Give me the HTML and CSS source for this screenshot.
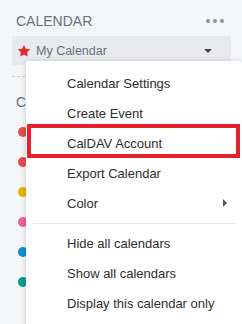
FILE: index.html
```html
<!DOCTYPE html>
<html lang="en">
<head>
    <meta charset="UTF-8">
    <meta name="viewport" content="width=device-width, initial-scale=1.0">
    <title>Calendar</title>
    <link rel="stylesheet" href="styles.css">
</head>
<body>
    <div class="sidebar">
        <div class="head">
            <span class="title">CALENDAR</span>
            <span class="more"><i></i><i></i><i></i></span>
        </div>
        <div class="current">
            <svg class="star" viewBox="0 0 24 24" width="14" height="14">
                <path d="M12 1.5l3.2 6.6 7.3 1-5.3 5.1 1.3 7.3L12 18l-6.5 3.5 1.3-7.3L1.5 9.1l7.3-1z" fill="#e8272f"/>
            </svg>
            <span class="name">My Calendar</span>
            <span class="caret"></span>
        </div>
        <div class="divider"></div>
        <div class="section">C</div>
        <ul class="cal-list">
            <li><span class="dot red"></span></li>
            <li><span class="dot red"></span></li>
            <li><span class="dot yellow"></span></li>
            <li><span class="dot pink"></span></li>
            <li><span class="dot blue"></span></li>
            <li><span class="dot teal"></span></li>
        </ul>

        <div class="menu">
            <div class="item">Calendar Settings</div>
            <div class="item">Create Event</div>
            <div class="item marked">CalDAV Account</div>
            <div class="item">Export Calendar</div>
            <div class="item sub">Color <span class="arrow"></span></div>
            <div class="sep"></div>
            <div class="item">Hide all calendars</div>
            <div class="item">Show all calendars</div>
            <div class="item">Display this calendar only</div>
        </div>
    </div>
</body>
</html>
```

FILE: styles.css
```css
* {
    margin: 0;
    padding: 0;
    box-sizing: border-box;
}

html, body {
    overflow: hidden;
}

body {
    background: #f5f6f8;
    font-family: "Liberation Sans", Arial, sans-serif;
}

.sidebar {
    position: relative;
    width: 243px;
    height: 324px;
    padding: 13px 12px 0 12px;
}

.head {
    display: flex;
    justify-content: space-between;
    align-items: center;
    height: 16px;
    padding: 0 7px 0 4px;
}

.title {
    font-size: 14px;
    line-height: 16px;
    color: #6a707c;
}

.more {
    display: flex;
    gap: 3px;
}

.more i {
    width: 4px;
    height: 4px;
    border-radius: 50%;
    background: #8d929d;
}

.current {
    display: flex;
    align-items: center;
    height: 29px;
    margin-top: 7px;
    padding: 0 19px 0 5px;
    background: #e9eaee;
}

.star {
    margin-right: 5px;
}

.name {
    flex: 1;
    font-size: 12.5px;
    color: #6a707c;
}

.caret {
    width: 0;
    height: 0;
    border-left: 4px solid transparent;
    border-right: 4px solid transparent;
    border-top: 4px solid #444;
}

.divider {
    margin-top: 11px;
    border-top: 1px dashed #c9ccd3;
}

.section {
    margin-top: 17px;
    padding-left: 4px;
    font-size: 14px;
    line-height: 16px;
    color: #6a707c;
}

.cal-list {
    list-style: none;
    margin-top: 7px;
}

.cal-list li {
    display: flex;
    align-items: center;
    height: 30px;
    padding-left: 6px;
}

.dot {
    width: 10px;
    height: 10px;
    border-radius: 50%;
}

.dot.red { background: #ea4b4b; }
.dot.yellow { background: #e5b400; }
.dot.pink { background: #f0609a; }
.dot.blue { background: #0b8fd3; }
.dot.teal { background: #0a9c94; }

.menu {
    position: absolute;
    left: 26px;
    top: 61px;
    width: 216px;
    padding: 7px 0 10px;
    background: #fff;
    border-radius: 2px;
    box-shadow: 0 1px 6px rgba(0, 0, 0, 0.18);
}

.item {
    position: relative;
    display: flex;
    align-items: center;
    height: 30px;
    padding: 0 15px 0 41px;
    font-size: 13px;
    color: #2e2e2e;
}

.item.sub {
    justify-content: space-between;
}

.arrow {
    width: 0;
    height: 0;
    border-top: 4px solid transparent;
    border-bottom: 4px solid transparent;
    border-left: 4px solid #555;
}

.item.marked::after {
    content: "";
    position: absolute;
    left: 1px;
    right: 2px;
    top: -4px;
    bottom: 0;
    border: 4px solid #e8202a;
}

.sep {
    margin: 5px 7px 4px;
    border-top: 1px solid #e6e7eb;
}
```
